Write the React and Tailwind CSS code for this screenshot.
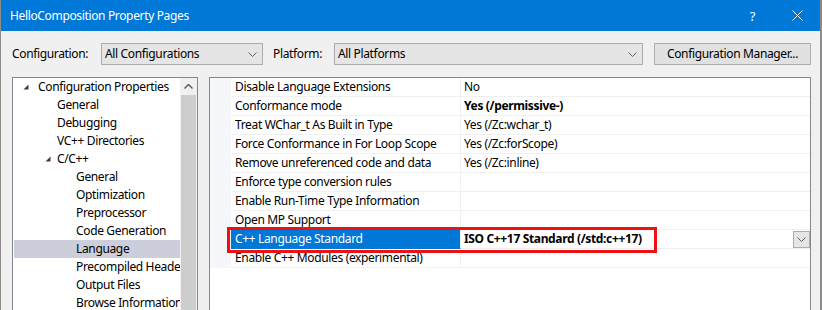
const treeItems = [
  { label: "Configuration Properties", level: 0, expanded: true },
  { label: "General", level: 1 },
  { label: "Debugging", level: 1 },
  { label: "VC++ Directories", level: 1 },
  { label: "C/C++", level: 1, expanded: true },
  { label: "General", level: 2 },
  { label: "Optimization", level: 2 },
  { label: "Preprocessor", level: 2 },
  { label: "Code Generation", level: 2 },
  { label: "Language", level: 2, selected: true },
  { label: "Precompiled Headers", level: 2 },
  { label: "Output Files", level: 2 },
  { label: "Browse Information", level: 2 },
];

const props = [
  { name: "Disable Language Extensions", value: "No" },
  { name: "Conformance mode", value: "Yes (/permissive-)", bold: true },
  { name: "Treat WChar_t As Built in Type", value: "Yes (/Zc:wchar_t)" },
  { name: "Force Conformance in For Loop Scope", value: "Yes (/Zc:forScope)" },
  { name: "Remove unreferenced code and data", value: "Yes (/Zc:inline)" },
  { name: "Enforce type conversion rules", value: "" },
  { name: "Enable Run-Time Type Information", value: "" },
  { name: "Open MP Support", value: "" },
  { name: "C++ Language Standard", value: "ISO C++17 Standard (/std:c++17)", bold: true, selected: true },
  { name: "Enable C++ Modules (experimental)", value: "" },
];

const Chevron = () => (
  <svg width="9" height="5" viewBox="0 0 9 5" className="block shrink-0">
    <path d="M0.5 0.5 L4.5 4.5 L8.5 0.5" fill="none" stroke="#606060" strokeWidth="1" />
  </svg>
);

const Dropdown = ({ text, width }) => (
  <div className={`h-[22px] ${width} shrink-0 bg-[#e5e5e5] border border-[#acacac] flex items-center pl-[3px] pr-[5px]`}>
    <span className="flex-1 whitespace-nowrap">{text}</span>
    <Chevron />
  </div>
);

const Triangle = () => (
  <svg width="6" height="6" viewBox="0 0 6 6" className="block">
    <polygon points="5.5,0.5 5.5,5.5 0.5,5.5" fill="#3c3c3c" />
  </svg>
);

export default function App() {
  return (
    <div className="w-[822px] h-[310px] overflow-hidden bg-[#f0f0f0] border-l border-r-2 border-[#8c8c8c] font-['Noto_Sans',sans-serif] text-[12px] tracking-[-0.35px] text-black leading-[16px]">
      {/* title bar */}
      <div className="h-[31px] bg-[#0078d7] flex items-center text-white">
        <span className="pl-[9px] flex-1">HelloComposition Property Pages</span>
        <div className="w-[45px] h-full flex items-center justify-center text-[13px]">?</div>
        <div className="w-[45px] h-full flex items-center justify-center">
          <svg width="11" height="11" viewBox="0 0 11 11">
            <path d="M0.5 0.5 L10.5 10.5 M10.5 0.5 L0.5 10.5" stroke="white" strokeWidth="1" />
          </svg>
        </div>
      </div>

      <div className="pt-[12px] pl-[11px]">
        {/* configuration row */}
        <div className="flex items-center h-[22px]">
          <span className="w-[89px] shrink-0">Configuration:</span>
          <Dropdown text="All Configurations" width="w-[162px]" />
          <span className="w-[61px] ml-[10px] shrink-0">Platform:</span>
          <Dropdown text="All Platforms" width="w-[309px]" />
          <button className="ml-[11px] w-[157px] h-[22px] shrink-0 bg-[#e1e1e1] border border-[#adadad] flex items-center justify-center">
            Configuration Manager...
          </button>
        </div>

        {/* panels */}
        <div className="flex mt-[12px] h-[240px]">
          {/* tree */}
          <div className="w-[186px] h-full shrink-0 bg-white border border-[#828790] flex">
            <div className="flex-1 min-w-0 overflow-hidden pl-[1px]">
              {treeItems.map((item, i) => (
                <div
                  key={i}
                  className={`h-[18px] flex items-center whitespace-nowrap ${item.selected ? "bg-[#cccedb]" : ""}`}
                >
                  <div className={`shrink-0 ${item.level === 0 ? "w-[9px]" : item.level === 1 ? "w-[31px]" : "w-[62px]"}`} />
                  {item.expanded ? (
                    <div className="w-[15px] shrink-0 flex items-center">
                      <Triangle />
                    </div>
                  ) : item.level === 1 ? (
                    <div className="w-[12px] shrink-0" />
                  ) : null}
                  {item.level === 1 && item.expanded ? (
                    <span className="shrink-0 -ml-[3px]">{item.label}</span>
                  ) : (
                    <span className="shrink-0">{item.label}</span>
                  )}
                </div>
              ))}
            </div>
            <div className="w-[17px] h-full shrink-0 bg-[#f0f0f0] flex flex-col">
              <div className="h-[17px] flex items-center justify-center">
                <svg width="9" height="5" viewBox="0 0 9 5" className="block">
                  <path d="M0.5 4.5 L4.5 0.5 L8.5 4.5" fill="none" stroke="#606060" strokeWidth="1.5" />
                </svg>
              </div>
              <div className="flex-1 mx-[1px] bg-[#cdcdcd]" />
            </div>
          </div>

          {/* property grid */}
          <div className="relative ml-[11px] w-[602px] h-full shrink-0 bg-white border border-[#828790]">
            {props.map((p, i) => (
              <div key={i} className="flex h-[19px]">
                <div className="w-[21px] shrink-0 bg-[#f5f7fb]" />
                <div
                  className={`w-[230px] shrink-0 pl-[4px] flex items-center border-b border-r border-[#f0f0f0] whitespace-nowrap ${
                    p.selected ? "bg-[#0078d7] text-white border-b-[#0078d7]" : ""
                  }`}
                >
                  {p.name}
                </div>
                <div className={`flex-1 pl-[3px] flex items-center border-b border-[#f0f0f0] ${p.bold ? "font-bold" : ""}`}>
                  <span className="flex-1 whitespace-nowrap">{p.value}</span>
                  {p.selected && (
                    <div className="w-[17px] h-[17px] bg-[#e5e5e5] border border-[#acacac] flex items-center justify-center">
                      <Chevron />
                    </div>
                  )}
                </div>
              </div>
            ))}
            <div className="absolute left-[17px] top-[149px] w-[430px] h-[26px] border-[3px] border-[#ee1111]" />
          </div>
        </div>
      </div>
    </div>
  );
}
